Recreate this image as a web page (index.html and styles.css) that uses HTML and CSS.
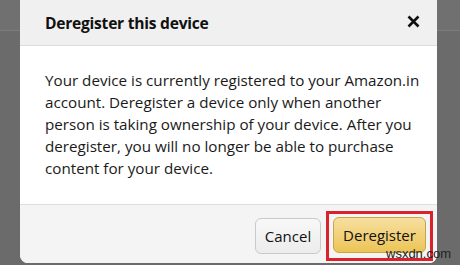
FILE: index.html
```html
<!DOCTYPE html>
<html>
<head>
<meta charset="utf-8">
<link rel="stylesheet" href="styles.css">
</head>
<body>
<div class="page">
  <div class="backdrop-top"></div>
  <div class="dialog">
    <div class="dialog-header">
      <h1 class="title">Deregister this device</h1>
      <svg class="close" width="13" height="13" viewBox="0 0 13 13"><path d="M1.5 1.5 L11.5 11.5 M11.5 1.5 L1.5 11.5" stroke="#111" stroke-width="2.6" stroke-linecap="butt"/></svg>
    </div>
    <div class="dialog-body">
      <p class="message">Your device is currently registered to your Amazon.in account. Deregister a device only when another person is taking ownership of your device. After you deregister, you will no longer be able to purchase content for your device.</p>
    </div>
    <div class="dialog-footer">
      <button class="btn btn-cancel">Cancel</button>
      <div class="highlight">
        <button class="btn btn-primary">Deregister</button>
      </div>
    </div>
  </div>
  <div class="watermark">wsxdn.com</div>
</div>
</body>
</html>
```
FILE: styles.css
```css
* { box-sizing: border-box; }
html, body { margin: 0; padding: 0; }
body {
  width: 460px;
  height: 265px;
  overflow: hidden;
  background: #6b6b6b;
  font-family: "Open Sans", "Noto Sans", sans-serif;
}
.page {
  position: relative;
  width: 460px;
  height: 265px;
}
.backdrop-top {
  height: 31px;
  background: #707070;
  border-bottom: 1px solid #7c7c7c;
}
.dialog {
  position: absolute;
  left: 20px;
  top: -10px;
  width: 417px;
  height: 273px;
  background: #fff;
  border-radius: 8px;
  overflow: hidden;
  display: flex;
  flex-direction: column;
}
.dialog-header {
  height: 56px;
  padding: 10px 15px 0 25px;
  background: #f0f0f0;
  border-bottom: 1px solid #dcdcdc;
  display: flex;
  align-items: center;
  justify-content: space-between;
}
.title {
  margin: 0;
  font-size: 15.6px;
  font-weight: 700;
  color: #111;
  letter-spacing: -0.25px;
}
.close { margin-right: 2px; margin-top: -3px; }
.dialog-body {
  flex: 1;
  padding: 23px 15px 0 25px;
}
.message {
  margin: 0;
  font-size: 15.2px;
  line-height: 22px;
  color: #1a1a1a;
}
.dialog-footer {
  height: 59px;
  background: #f4f4f4;
  border-top: 1px solid #dedede;
  display: flex;
  align-items: flex-start;
  justify-content: flex-end;
  padding: 6px 4px 0 0;
}
.btn {
  font-family: inherit;
  font-size: 15px;
  color: #111;
  height: 36px;
  border-radius: 6px;
  cursor: pointer;
}
.btn-cancel {
  margin-top: 7px;
  width: 66px;
  margin-right: 5px;
  background: linear-gradient(#f8f8f8, #ececec);
  border: 1px solid #c9c9c9;
}
.highlight {
  border: 3px solid #d8222c;
  padding: 3px 4px 4px 4px;
  width: 107px;
  height: 50px;
}
.btn-primary {
  width: 93px;
  background: linear-gradient(#f7dfa0, #ecc456);
  border: 1px solid #c9a444;
}
.watermark {
  position: absolute;
  left: 386px;
  top: 246px;
  font-family: "Liberation Sans", sans-serif;
  font-size: 13px;
  color: #222;
}
```
